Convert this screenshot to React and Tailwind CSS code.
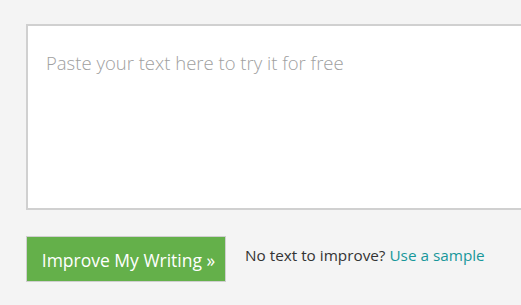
export default function App() {
  return (
    <div className="w-full h-[305px] overflow-hidden bg-[#f4f4f4] pl-[26px] pt-[24px] font-['Open_Sans',sans-serif]">
      <textarea
        className="block w-[520px] h-[186px] border-2 border-[#d0d0d0] bg-white px-[18px] pt-[23px] pb-[20px] text-[18.5px] leading-[28px] font-light text-[#333] placeholder:text-[#a0a0a0] resize-none outline-none"
        placeholder="Paste your text here to try it for free"
      />
      <div className="flex items-center mt-[26px]">
        <button className="w-[200px] h-[46px] bg-[#64b04a] border border-[#cfcfcf] pl-[5px] pt-[3px] text-white text-[17.5px] text-center">
          Improve My Writing »
        </button>
        <p className="ml-[19px] mb-[8px] text-[15.3px] text-[#333]">
          No text to improve? <a href="#" className="text-[#17979a]">Use a sample</a>
        </p>
      </div>
    </div>
  );
}
